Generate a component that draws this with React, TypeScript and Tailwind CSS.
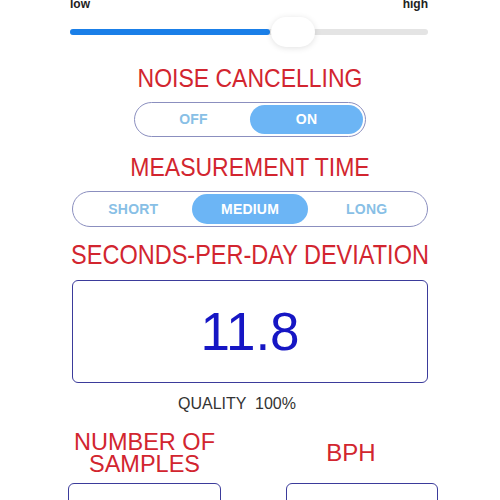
import { useState } from "react";

const title = "leading-[24px] h-[24px] text-[#d2252f] text-center scale-y-[1.15]";

function Segmented({
  options,
  value,
  onChange,
  className,
}: {
  options: string[];
  value: string;
  onChange: (v: string) => void;
  className: string;
}) {
  return (
    <div
      className={`mx-auto flex rounded-full border border-[#8b8fbf] p-[2px] ${className}`}
    >
      {options.map((opt) => (
        <button
          key={opt}
          onClick={() => onChange(opt)}
          className={`flex-1 rounded-full text-[14px] font-bold tracking-[0.2px] ${
            opt === value ? "bg-[#6cb5f5] text-white" : "text-[#88bfe6]"
          }`}
        >
          {opt}
        </button>
      ))}
    </div>
  );
}

export default function App() {
  const [noise, setNoise] = useState("ON");
  const [time, setTime] = useState("MEDIUM");

  return (
    <div className="w-[500px] h-[500px] overflow-hidden bg-white font-['Liberation_Sans',Arial,sans-serif]">
      {/* SENSITIVITY SLIDER */}
      <div className="w-[358px] ml-[70px]">
        <div className="mt-[-2px] flex justify-between text-[12px] leading-[12px] font-bold text-[#222]">
          <span>low</span>
          <span>high</span>
        </div>
        <div className="relative mt-[7px] h-[30px]">
          <div className="absolute left-0 right-0 top-[12px] h-[6px] rounded-full bg-[#e4e4e4]" />
          <div className="absolute left-0 top-[12px] h-[6px] w-[200px] rounded-full bg-[#1a7fe8]" />
          <div className="absolute left-[201px] top-0 h-[30px] w-[44px] rounded-full bg-white shadow-[0_1px_6px_rgba(0,0,0,0.12)]" />
        </div>
      </div>

      {/* NOISE CANCELLING */}
      <div className={`${title} mt-[19px] text-[23px]`}>NOISE CANCELLING</div>
      <Segmented
        options={["OFF", "ON"]}
        value={noise}
        onChange={setNoise}
        className="mt-[12px] h-[35px] w-[232px]"
      />

      {/* MEASUREMENT TIME */}
      <div className={`${title} mt-[18px] text-[23px]`}>MEASUREMENT TIME</div>
      <Segmented
        options={["SHORT", "MEDIUM", "LONG"]}
        value={time}
        onChange={setTime}
        className="mt-[12px] h-[36px] w-[356px]"
      />

      {/* DEVIATION */}
      <div className={`${title} mt-[16px] text-[23.5px]`}>SECONDS-PER-DAY DEVIATION</div>
      <div className="mx-auto mt-[13px] flex h-[103px] w-[356px] items-center justify-center rounded-[6px] border-[1.5px] border-[#3b3b9b]">
        <span className="text-[53px] leading-none text-[#1616c4]">11.8</span>
      </div>
      <div className="mt-[13px] h-[16px] pr-[26px] text-center text-[16px] leading-[16px] whitespace-pre text-[#333]">
        QUALITY  100%
      </div>

      {/* SAMPLES / BPH */}
      <div className="ml-[68px] mt-[19px] flex w-[370px] justify-between">
        <div className="w-[153px]">
          <div className="h-[44px] text-center text-[23.5px] leading-[22px] text-[#d2252f]">
            NUMBER OF
            <br />
            SAMPLES
          </div>
          <div className="mt-[8px] h-[60px] rounded-[6px] border-[1.5px] border-[#3b3b9b]" />
        </div>
        <div className="w-[152px]">
          <div className="flex h-[44px] items-center justify-center pr-[22px] text-[24px] leading-[22px] text-[#d2252f]">
            BPH
          </div>
          <div className="mt-[8px] h-[60px] rounded-[6px] border-[1.5px] border-[#3b3b9b]" />
        </div>
      </div>
    </div>
  );
}
